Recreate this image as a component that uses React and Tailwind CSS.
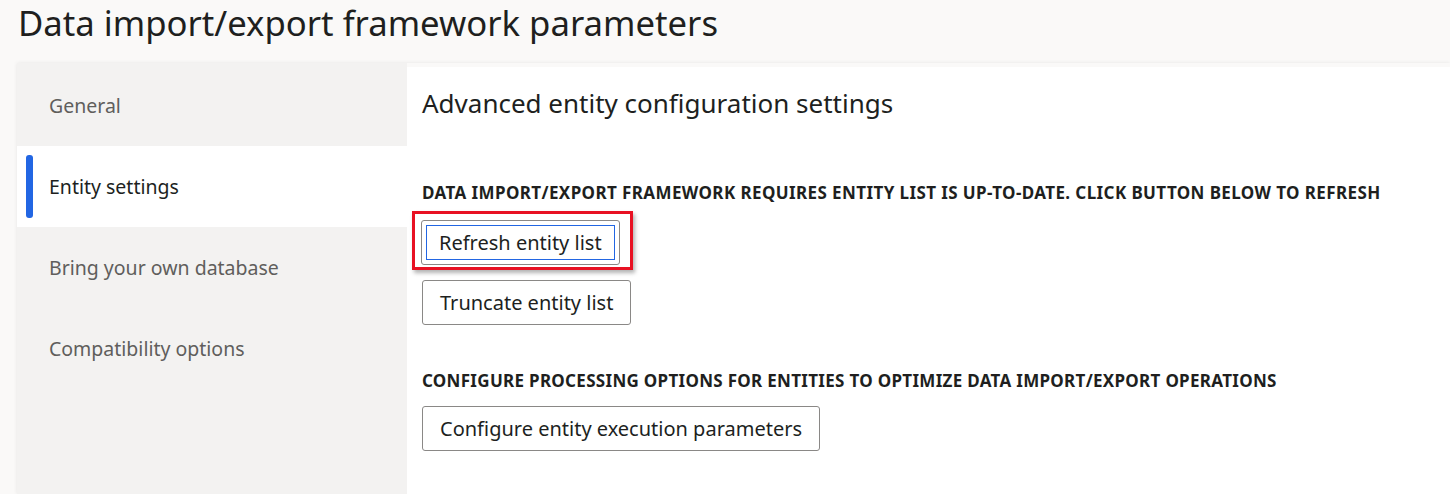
import React from 'react';

const navItems = ['General', 'Entity settings', 'Bring your own database', 'Compatibility options'];

const ActionButton = ({ children, focused }) => (
  <button className="relative h-[45px] px-[17px] border border-[#8a8886] rounded-[3px] bg-white text-[20px] text-[#201f1e] leading-none">
    {focused && <span className="absolute inset-[4px] border border-[#2266e3]"></span>}
    <span className="relative">{children}</span>
  </button>
);

export default function App() {
  return (
    <div className="w-[1450px] h-[494px] bg-[#faf9f8] overflow-hidden font-['Noto_Sans','Open_Sans',sans-serif]">
      {/* Page title */}
      <h1 className="pl-[18px] pt-[1px] h-[63px] text-[34.7px] leading-[44px] text-[#201f1e]">
        Data import/export framework parameters
      </h1>

      {/* Panel */}
      <div className="ml-[17px] flex h-[431px] shadow-[0_0_4px_rgba(0,0,0,0.08)]">
        {/* Side nav */}
        <div className="w-[390px] bg-[#f3f2f1] pt-[2px]">
          {navItems.map((item) => {
            const active = item === 'Entity settings';
            return (
              <div
                key={item}
                className={`relative h-[81px] flex items-center pl-[32px] text-[19.5px] ${active ? 'bg-white text-[#201f1e]' : 'text-[#605e5c]'}`}
              >
                {active && <span className="absolute left-[9px] top-[9px] bottom-[9px] w-[7px] rounded-[3px] bg-[#2266e3]"></span>}
                {item}
              </div>
            );
          })}
        </div>

        {/* Content */}
        <div className="flex-1 bg-white mt-[4px] pl-[15px] pt-[19px]">
          <h2 className="text-[26px] leading-[34px] text-[#201f1e]">Advanced entity configuration settings</h2>

          <div className="mt-[63px] text-[17px] leading-[20px] tracking-[0.4px] font-bold text-[#201f1e]">
            DATA IMPORT/EXPORT FRAMEWORK REQUIRES ENTITY LIST IS UP-TO-DATE. CLICK BUTTON BELOW TO REFRESH
          </div>

          <div className="mt-[8px] -ml-[10px] inline-block border-[3px] border-[#e81123] pl-[6px] pr-[10px] pt-[6px] pb-[2px] shadow-[2px_3px_4px_rgba(0,0,0,0.3)]">
            <ActionButton focused>Refresh entity list</ActionButton>
          </div>

          <div className="mt-[10px]">
            <ActionButton>Truncate entity list</ActionButton>
          </div>

          <div className="mt-[46px] text-[17px] leading-[20px] tracking-[0.3px] font-bold text-[#201f1e]">
            CONFIGURE PROCESSING OPTIONS FOR ENTITIES TO OPTIMIZE DATA IMPORT/EXPORT OPERATIONS
          </div>

          <div className="mt-[15px]">
            <ActionButton>Configure entity execution parameters</ActionButton>
          </div>
        </div>
      </div>
    </div>
  );
}
